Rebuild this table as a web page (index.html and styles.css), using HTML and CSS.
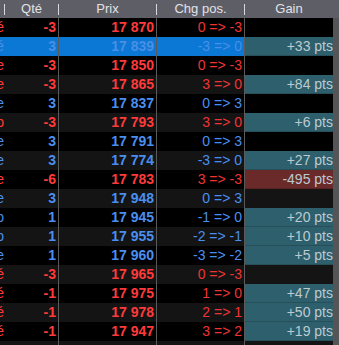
FILE: index.html
```html
<!DOCTYPE html>
<html lang="fr">
<head>
<meta charset="utf-8">
<title>Positions</title>
<link rel="stylesheet" href="styles.css">
</head>
<body>
<div class="grid">
  <div class="head">
    <div class="h h-lead"></div><div class="sep"></div>
    <div class="h h-qte">Qté</div><div class="sep"></div>
    <div class="h h-prix">Prix</div><div class="sep"></div>
    <div class="h h-chg">Chg pos.</div><div class="sep"></div>
    <div class="h h-gain">Gain</div>
  </div>

  <div class="row sell"><div class="c lead"><span>Vendé</span></div><div class="c qte">-3</div><div class="c prix">17 870</div><div class="c chg">0 =&gt; -3</div><div class="c gain"></div><div class="c bar"></div></div>
  <div class="row buy sel"><div class="c lead"><span>Acheté</span></div><div class="c qte">3</div><div class="c prix">17 839</div><div class="c chg">-3 =&gt; 0</div><div class="c gain pos">+33 pts</div><div class="c bar"></div></div>
  <div class="row sell"><div class="c lead"><span>Vente</span></div><div class="c qte">-3</div><div class="c prix">17 850</div><div class="c chg">0 =&gt; -3</div><div class="c gain"></div><div class="c bar"></div></div>
  <div class="row sell alt"><div class="c lead"><span>Vente</span></div><div class="c qte">-3</div><div class="c prix">17 865</div><div class="c chg">3 =&gt; 0</div><div class="c gain pos">+84 pts</div><div class="c bar"></div></div>
  <div class="row buy"><div class="c lead"><span>Achate</span></div><div class="c qte">3</div><div class="c prix">17 837</div><div class="c chg">0 =&gt; 3</div><div class="c gain"></div><div class="c bar"></div></div>
  <div class="row sell alt"><div class="c lead"><span>Stop</span></div><div class="c qte">-3</div><div class="c prix">17 793</div><div class="c chg">3 =&gt; 0</div><div class="c gain pos">+6 pts</div><div class="c bar"></div></div>
  <div class="row buy"><div class="c lead"><span>Achate</span></div><div class="c qte">3</div><div class="c prix">17 791</div><div class="c chg">0 =&gt; 3</div><div class="c gain"></div><div class="c bar"></div></div>
  <div class="row buy alt"><div class="c lead"><span>Achate</span></div><div class="c qte">3</div><div class="c prix">17 774</div><div class="c chg">-3 =&gt; 0</div><div class="c gain pos">+27 pts</div><div class="c bar"></div></div>
  <div class="row sell"><div class="c lead"><span>Vente</span></div><div class="c qte">-6</div><div class="c prix">17 783</div><div class="c chg">3 =&gt; -3</div><div class="c gain neg">-495 pts</div><div class="c bar"></div></div>
  <div class="row buy alt"><div class="c lead"><span>Achate</span></div><div class="c qte">3</div><div class="c prix">17 948</div><div class="c chg">0 =&gt; 3</div><div class="c gain"></div><div class="c bar"></div></div>
  <div class="row buy"><div class="c lead"><span>Stop</span></div><div class="c qte">1</div><div class="c prix">17 945</div><div class="c chg">-1 =&gt; 0</div><div class="c gain pos">+20 pts</div><div class="c bar"></div></div>
  <div class="row buy alt"><div class="c lead"><span>Stop</span></div><div class="c qte">1</div><div class="c prix">17 955</div><div class="c chg">-2 =&gt; -1</div><div class="c gain pos">+10 pts</div><div class="c bar"></div></div>
  <div class="row buy"><div class="c lead"><span>Achate</span></div><div class="c qte">1</div><div class="c prix">17 960</div><div class="c chg">-3 =&gt; -2</div><div class="c gain pos">+5 pts</div><div class="c bar"></div></div>
  <div class="row sell alt"><div class="c lead"><span>Vendé</span></div><div class="c qte">-3</div><div class="c prix">17 965</div><div class="c chg">0 =&gt; -3</div><div class="c gain"></div><div class="c bar"></div></div>
  <div class="row sell"><div class="c lead"><span>Vendé</span></div><div class="c qte">-1</div><div class="c prix">17 975</div><div class="c chg">1 =&gt; 0</div><div class="c gain pos">+47 pts</div><div class="c bar"></div></div>
  <div class="row sell alt"><div class="c lead"><span>Vendé</span></div><div class="c qte">-1</div><div class="c prix">17 978</div><div class="c chg">2 =&gt; 1</div><div class="c gain pos">+50 pts</div><div class="c bar"></div></div>
  <div class="row sell"><div class="c lead"><span>Vendé</span></div><div class="c qte">-1</div><div class="c prix">17 947</div><div class="c chg">3 =&gt; 2</div><div class="c gain pos">+19 pts</div><div class="c bar"></div></div>
  <div class="row alt"><div class="c lead"></div><div class="c qte"></div><div class="c prix"></div><div class="c chg"></div><div class="c gain"></div><div class="c bar"></div></div>
</div>
</body>
</html>
```

FILE: styles.css
```css
html, body {
  margin: 0;
  padding: 0;
  background: #000;
}

body {
  width: 339px;
  height: 345px;
  overflow: hidden;
  font-family: "Liberation Sans", Arial, sans-serif;
}

.grid {
  display: flex;
  flex-direction: column;
  width: 339px;
}

.head {
  display: flex;
  align-items: center;
  height: 18px;
  background: #5e5e66;
  color: #e2e2e6;
  font-size: 13px;
}

.h {
  text-align: center;
  line-height: 18px;
  white-space: nowrap;
}

.h-lead { width: 4px; }
.h-qte { width: 53px; }
.h-prix { width: 97px; }
.h-chg { width: 87px; }
.h-gain { flex: 1; padding-right: 6px; }

.sep {
  width: 1px;
  height: 11px;
  background: #d8d8dc;
}

.row {
  display: flex;
  height: 19px;
  background: #000;
  font-size: 14px;
  line-height: 19px;
}

.row.alt { background: #141414; }
.row.sel { background: #0a78d4; }

.c {
  box-sizing: border-box;
  height: 19px;
  white-space: nowrap;
  text-align: right;
  padding-right: 2px;
  overflow: hidden;
}

.lead {
  width: 5px;
  padding-right: 1px;
  display: flex;
  justify-content: flex-end;
}

.qte {
  width: 54px;
  border-right: 1px solid #5a5a5a;
  font-weight: bold;
}

.prix {
  width: 98px;
  border-right: 1px solid #5a5a5a;
  font-weight: bold;
}

.chg {
  width: 88px;
  border-right: 1px solid #5a5a5a;
}

.gain {
  width: 88px;
  padding-right: 0;
  color: #bccbd1;
}

.gain.pos { background: #2e5f6c; border-bottom: 1px solid #274f5a; }
.gain.neg { background: #6a2a2a; border-bottom: 1px solid #5a2424; }

.bar {
  width: 6px;
  padding: 0;
  background: #555558;
}

.sell { color: #ff3a3a; }
.sell .chg { color: #ee3434; }
.buy { color: #4a8ff0; }
.buy.sel { color: #4a8ee6; }
.buy.sel .gain { color: #bccbd1; }
.gain { color: #bccbd1; }
.sell .gain, .buy .gain { color: #bccbd1; }
```
